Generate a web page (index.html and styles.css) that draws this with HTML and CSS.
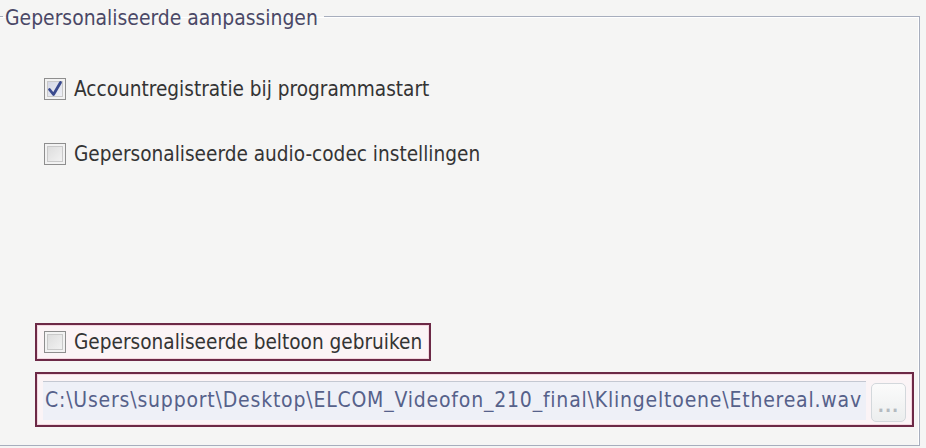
FILE: index.html
```html
<!DOCTYPE html>
<html lang="nl">
<head>
    <meta charset="UTF-8">
    <title>Gepersonaliseerde aanpassingen</title>
    <link rel="stylesheet" href="styles.css">
</head>
<body>
<fieldset class="group">
    <legend>Gepersonaliseerde aanpassingen</legend>
    <div class="group-body">
        <label class="option first">
            <span class="check checked">
                <svg viewBox="0 0 22 22" width="22" height="22"><path d="M5.5 11.5 L9.5 16.5 L16.5 4.5" fill="none" stroke="#3a4a8e" stroke-width="2.8" stroke-linecap="round" stroke-linejoin="round"/></svg>
            </span>
            Accountregistratie bij programmastart
        </label>
        <label class="option second">
            <span class="check"></span>
            Gepersonaliseerde audio-codec instellingen
        </label>

        <div class="ringtone">
            <label class="option marked ringtone-toggle">
                <span class="check"></span>
                Gepersonaliseerde beltoon gebruiken
            </label>
            <div class="file-row marked">
                <input class="file-path" type="text" value="C:\Users\support\Desktop\ELCOM_Videofon_210_final\Klingeltoene\Ethereal.wav" readonly>
                <button class="browse" type="button">...</button>
            </div>
        </div>
    </div>
</fieldset>
</body>
</html>
```

FILE: styles.css
```css
body {
    margin: 0;
    background-color: #f5f5f4;
    font-family: "DejaVu Sans Condensed", "DejaVu Sans", sans-serif;
    font-size: 20.6px;
    color: #343434;
}

/* group box, left edge runs off the window */
.group {
    box-sizing: border-box;
    width: 920px;
    height: 446px;
    margin: 0;
    padding: 0;
    border: 1px solid #a7aebd;
    border-left: none;
    box-shadow: inset 0 1px 0 #ffffff, inset -1px 0 0 #ffffff;
}

.group legend {
    margin-left: 3px;
    padding: 4px 6px 0 2px;
    line-height: 28px;
    font-size: 20.9px;
    color: #4a4866;
}

.group-body {
    box-sizing: border-box;
    height: 413px;
    display: flex;
    flex-direction: column;
    align-items: flex-start;
    padding: 44px 5px 18px 35px;
}

.option {
    display: flex;
    align-items: center;
    gap: 8px;
    height: 26px;
    white-space: nowrap;
}

.option.first,
.option.second {
    margin-left: 9px;
}

.option.second {
    margin-top: 39px;
}

.check {
    box-sizing: border-box;
    width: 22px;
    height: 22px;
    flex: none;
    border: 1px solid #8e8e8e;
    background: linear-gradient(135deg, #d9d9d9, #f6f6f6);
    box-shadow: inset 0 0 0 2px #f2f2f2, inset 0 0 0 3px #c9c9c9;
}

.check svg {
    display: block;
    margin: -1px;
}

.check.checked {
    background: linear-gradient(135deg, #cfd3e2, #f3f4f9);
}

/* red markers around the ringtone controls */
.marked {
    box-sizing: border-box;
    border: 2px solid #6c2946;
    background-color: #fbf4f6;
    box-shadow: inset 0 0 0 1px #f3d6df;
}

.ringtone {
    margin-top: auto;
    align-self: stretch;
    display: flex;
    flex-direction: column;
    align-items: flex-start;
}

.ringtone-toggle {
    height: 38px;
    padding: 0 7px 0 7px;
}

.file-row {
    align-self: stretch;
    display: flex;
    align-items: flex-start;
    gap: 5px;
    height: 55px;
    margin-top: 11px;
    padding: 7px 6px 0 6px;
}

.file-path {
    box-sizing: border-box;
    flex: 1;
    height: 39px;
    margin: 0;
    padding: 0 0 2px 2px;
    border: none;
    border-top: 1px solid #c4c8d2;
    background-color: #eef0f7;
    font-family: inherit;
    font-size: 21px;
    letter-spacing: 0.8px;
    color: #56618a;
    outline: none;
}

.browse {
    box-sizing: border-box;
    width: 35px;
    height: 39px;
    margin-top: 2px;
    padding: 6px 0 0;
    border: 1px solid #d3d8dc;
    border-radius: 5px;
    background: linear-gradient(#fbfbfb, #eceeee);
    font-family: inherit;
    font-size: 18px;
    font-weight: bold;
    letter-spacing: 1px;
    color: #b4bac0;
}
```
